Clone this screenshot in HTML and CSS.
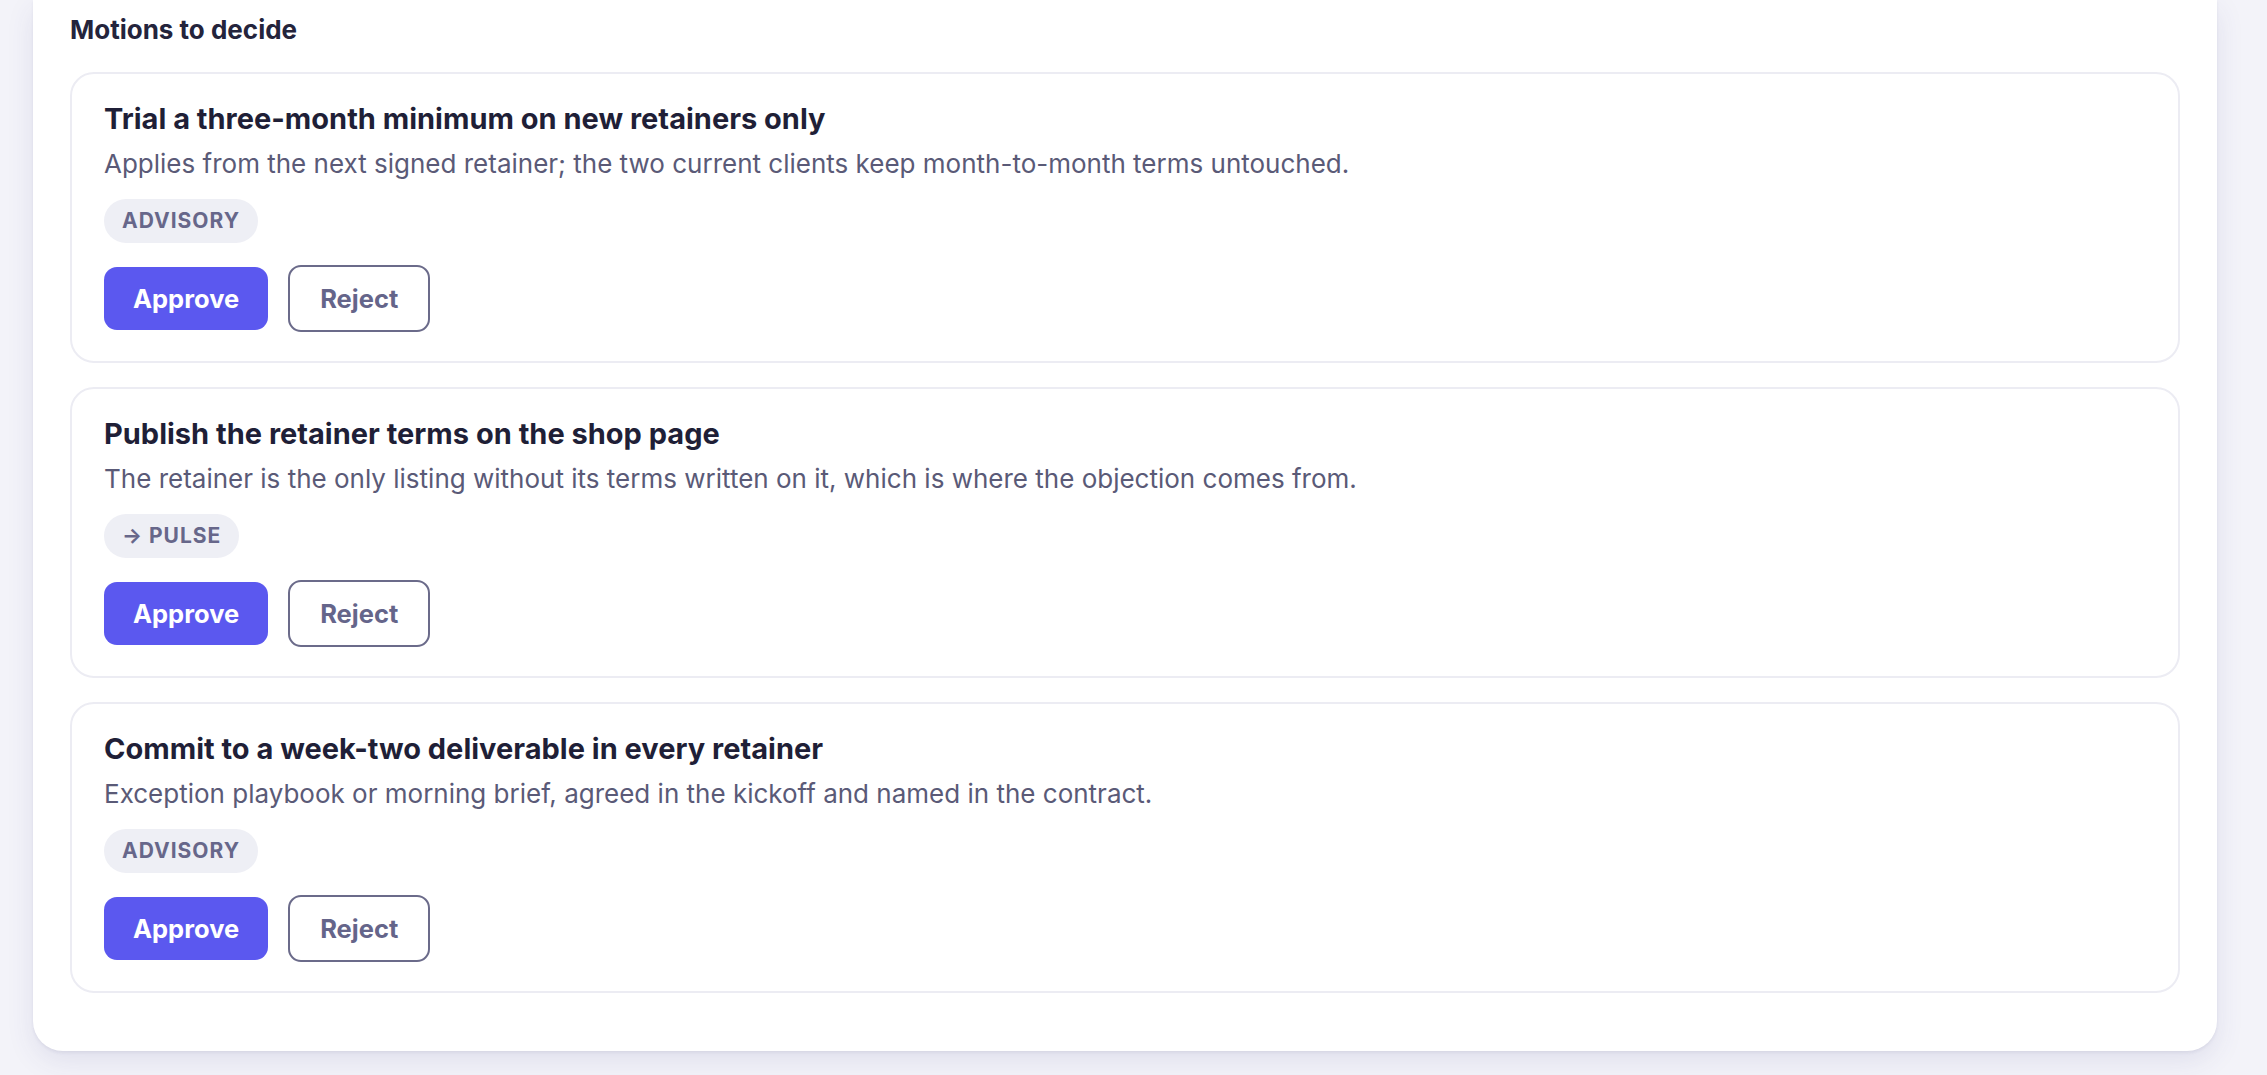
FILE: index.html
```html
<!DOCTYPE html>
<html lang="en">
<head>
<meta charset="utf-8">
<title>Motions to decide</title>
<link rel="stylesheet" href="styles.css">
</head>
<body>
<main class="panel">
  <h2 class="section-title">Motions to decide</h2>
  <div class="motions">
    <article class="motion">
      <h3 class="motion-title">Trial a three-month minimum on new retainers only</h3>
      <p class="motion-desc">Applies from the next signed retainer; the two current clients keep month-to-month terms untouched.</p>
      <span class="tag">ADVISORY</span>
      <div class="actions">
        <button class="btn btn-approve" type="button">Approve</button>
        <button class="btn btn-reject" type="button">Reject</button>
      </div>
    </article>
    <article class="motion">
      <h3 class="motion-title">Publish the retainer terms on the shop page</h3>
      <p class="motion-desc">The retainer is the only listing without its terms written on it, which is where the objection comes from.</p>
      <span class="tag">&#8594; PULSE</span>
      <div class="actions">
        <button class="btn btn-approve" type="button">Approve</button>
        <button class="btn btn-reject" type="button">Reject</button>
      </div>
    </article>
    <article class="motion">
      <h3 class="motion-title">Commit to a week-two deliverable in every retainer</h3>
      <p class="motion-desc">Exception playbook or morning brief, agreed in the kickoff and named in the contract.</p>
      <span class="tag">ADVISORY</span>
      <div class="actions">
        <button class="btn btn-approve" type="button">Approve</button>
        <button class="btn btn-reject" type="button">Reject</button>
      </div>
    </article>
  </div>
</main>
</body>
</html>
```

FILE: styles.css
```css
html, body {
  margin: 0;
  padding: 0;
}

body {
  background: #f3f3f9;
  font-family: Inter, "Noto Sans", "Liberation Sans", sans-serif;
  color: #22223a;
  height: 1075px;
  overflow: hidden;
}

.panel {
  margin: 0 50px 0 33px;
  background: #ffffff;
  border-radius: 0 0 30px 30px;
  padding: 14px 37px 58px;
  box-shadow: 0 2px 3px rgba(60, 60, 120, 0.07), 0 10px 28px rgba(60, 60, 130, 0.10);
}

.section-title {
  margin: 0 0 26px;
  font-size: 26px;
  line-height: 32px;
  font-weight: 700;
  color: #24243c;
}

.motions {
  display: flex;
  flex-direction: column;
  gap: 24px;
}

.motion {
  display: flex;
  flex-direction: column;
  align-items: flex-start;
  border: 2px solid #ececf3;
  border-radius: 24px;
  padding: 27px 32px 29px;
}

.motion-title {
  margin: 0;
  font-size: 29px;
  line-height: 36px;
  font-weight: 700;
  color: #1f1f37;
}

.motion-desc {
  margin: 9px 0 17px;
  font-size: 26px;
  line-height: 36px;
  font-weight: 400;
  color: #5a5a77;
}

.tag {
  display: inline-block;
  background: #eeeff5;
  color: #67678a;
  font-size: 21px;
  line-height: 26px;
  font-weight: 700;
  letter-spacing: 1px;
  padding: 9px 18px;
  border-radius: 999px;
}

.actions {
  display: flex;
  align-items: center;
  gap: 20px;
  margin-top: 22px;
}

.btn {
  font-family: inherit;
  font-size: 25.5px;
  line-height: 33px;
  font-weight: 700;
  padding: 15px 29px;
  border-radius: 13px;
  cursor: pointer;
}

.btn-approve {
  background: #5b58ef;
  color: #ffffff;
  border: 0;
}

.btn-reject {
  background: #ffffff;
  color: #65658a;
  border: 2px solid #6b6b8a;
  padding: 15px 30px;
}
```
